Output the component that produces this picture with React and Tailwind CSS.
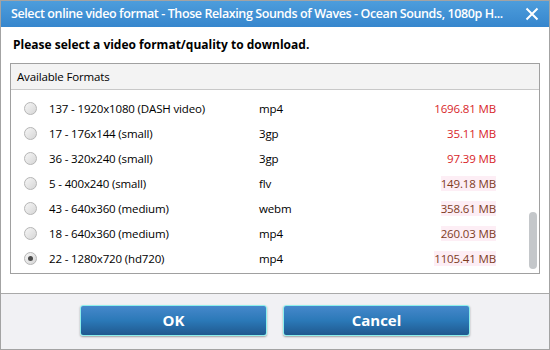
import React, { useState } from 'react';

const formats = [
    { id: '137', label: '137 - 1920x1080 (DASH video)', ext: 'mp4', size: '1696.81 MB', hot: true },
    { id: '17', label: '17 - 176x144 (small)', ext: '3gp', size: '35.11 MB', hot: true },
    { id: '36', label: '36 - 320x240 (small)', ext: '3gp', size: '97.39 MB', hot: true },
    { id: '5', label: '5 - 400x240 (small)', ext: 'flv', size: '149.18 MB' },
    { id: '43', label: '43 - 640x360 (medium)', ext: 'webm', size: '358.61 MB' },
    { id: '18', label: '18 - 640x360 (medium)', ext: 'mp4', size: '260.03 MB' },
    { id: '22', label: '22 - 1280x720 (hd720)', ext: 'mp4', size: '1105.41 MB' },
];

const Radio = ({ checked }) => (
    <span className="flex h-[13px] w-[13px] shrink-0 items-center justify-center rounded-full border border-[#b5b5b5] bg-gradient-to-br from-[#f6f6f6] to-[#d6d6d6]">
        {checked && <span className="h-[5px] w-[5px] rounded-full bg-[#4a4a4a]" />}
    </span>
);

const App = () => {
    const [selected, setSelected] = useState('22');

    return (
        <div className="flex h-[350px] w-[550px] flex-col border border-[#a3a3a3] bg-white text-[12px] text-black" style={{ fontFamily: '"Open Sans", "Liberation Sans", sans-serif' }}>
            {/* barra de titulo */}
            <div className="flex h-[26px] shrink-0 items-center justify-between bg-gradient-to-b from-[#4d9ddc] to-[#3686cd] pl-[10px] pr-[8px] text-white">
                <span className="whitespace-nowrap text-[12.5px] font-semibold tracking-[-0.4px]">
                    Select online video format - Those Relaxing Sounds of Waves - Ocean Sounds, 1080p H...
                </span>
                <svg width="14" height="14" viewBox="0 0 14 14" className="ml-[16px] mr-[2px] shrink-0">
                    <path d="M1.5 1.5 L12.5 12.5 M12.5 1.5 L1.5 12.5" stroke="white" strokeWidth="2" />
                </svg>
            </div>

            <div className="flex flex-1 flex-col pl-[9px]">
                <p className="pl-[3px] pt-[9px] text-[12px] font-bold leading-[18px]">
                    Please select a video format/quality to download.
                </p>

                <div className="mt-[9px] flex h-[211px] w-[530px] flex-col border border-[#a0a0a0]">
                    <div className="flex h-[26px] shrink-0 items-center border-b border-[#c8c8c8] bg-[#f3f3f3] pl-[6px] text-[11.5px] tracking-[-0.15px]">
                        Available Formats
                    </div>
                    <div className="relative flex-1 pt-[6px] text-[11.5px] tracking-[-0.15px]">
                        {formats.map((f) => (
                            <div
                                key={f.id}
                                onClick={() => setSelected(f.id)}
                                className="flex h-[25px] items-center pl-[13px]"
                            >
                                <Radio checked={selected === f.id} />
                                <span className="ml-[12px] w-[210px]">{f.label}</span>
                                <span className="w-[150px]">{f.ext}</span>
                                <span className="w-[87px] text-right">
                                    <span className={f.hot ? 'text-[#d8262a]' : 'bg-[#fdeef5] text-[#7e3c1e]'}>{f.size}</span>
                                </span>
                            </div>
                        ))}
                        {/* scrollbar */}
                        <div className="absolute right-[2px] top-[122px] h-[57px] w-[8px] rounded-full bg-[#c4c7ca]" />
                    </div>
                </div>
            </div>

            <div className="flex h-[56px] shrink-0 justify-center gap-[16px] border-t border-[#a9a9a9] bg-[#f1f1f4] pt-[11px]">
                <button className="h-[31px] w-[187px] rounded-[3px] border border-[#8ef0ec] bg-gradient-to-b from-[#4588cb] via-[#2b79b8] to-[#20598f] text-[15px] font-bold text-white shadow-[0_1px_2px_rgba(0,0,0,0.35)]">
                    OK
                </button>
                <button className="h-[31px] w-[187px] rounded-[3px] border border-[#8ef0ec] bg-gradient-to-b from-[#4588cb] via-[#2b79b8] to-[#20598f] text-[15px] font-bold text-white shadow-[0_1px_2px_rgba(0,0,0,0.35)]">
                    Cancel
                </button>
            </div>
        </div>
    );
};

export default App;
